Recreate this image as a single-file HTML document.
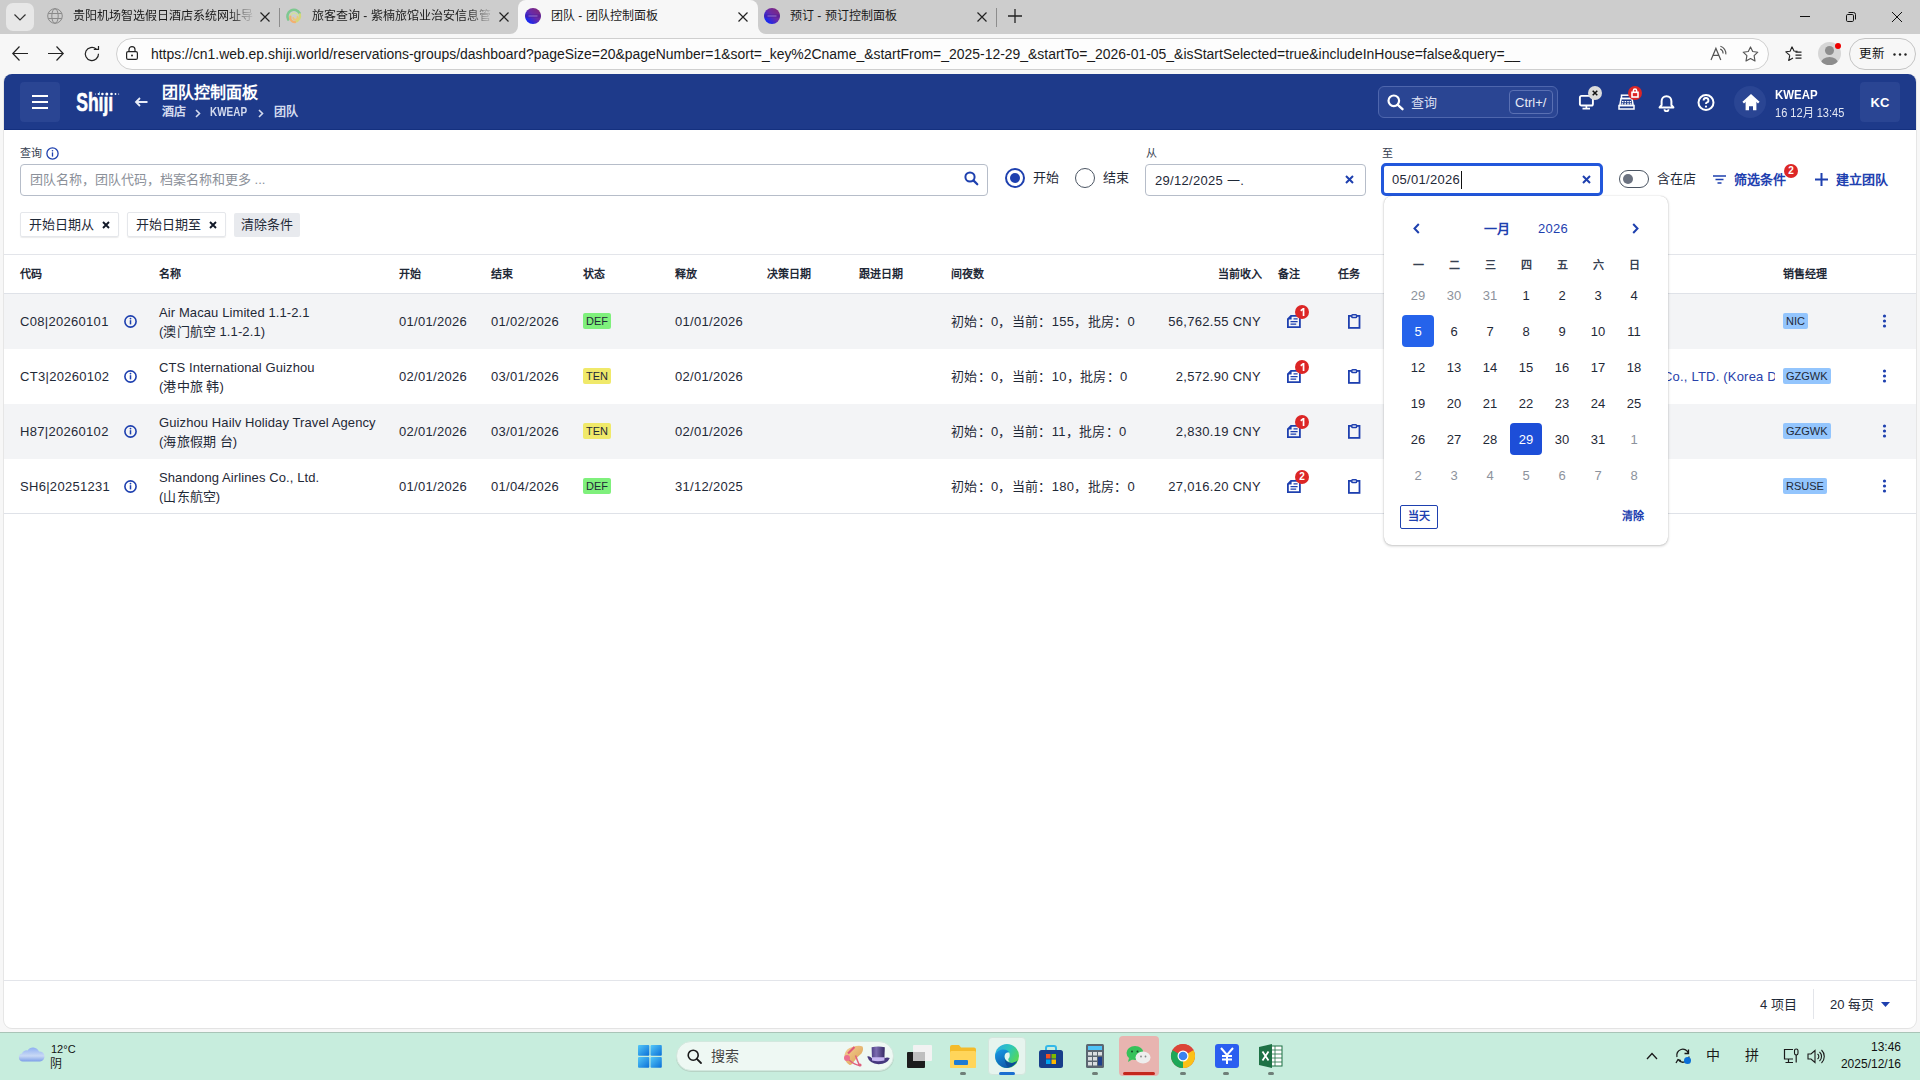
<!DOCTYPE html>
<html lang="zh-CN"><head><meta charset="utf-8">
<style>
*{box-sizing:border-box;margin:0;padding:0}
html,body{width:1920px;height:1080px;overflow:hidden;background:#f7f7f7;font-family:"Liberation Sans",sans-serif;color:#1f2937}
.a{position:absolute;white-space:nowrap}
svg{position:absolute;overflow:visible}
/* chrome */
#tabbar{position:absolute;left:0;top:0;width:1920px;height:34px;background:#cdcdcd}
.tabt{position:absolute;white-space:nowrap;overflow:hidden;top:9px;font-size:12px;line-height:14px;color:#1a1a1a}
.fade{-webkit-mask-image:linear-gradient(90deg,#000 85%,transparent)}
#toolbar{position:absolute;left:0;top:34px;width:1920px;height:40px;background:#f7f7f7}
#url{position:absolute;left:116px;top:38px;width:1653px;height:32px;border:1px solid #cfcfcf;border-radius:16px;background:#fdfdfd}
/* page */
#page{position:absolute;left:4px;top:74px;width:1912px;height:954px;background:#fff;border-radius:8px;overflow:hidden;box-shadow:0 0 1px #bbb}
#hdr{position:absolute;left:0;top:0;width:1912px;height:56px;background:#1f3a8a;border-bottom:1px solid #10297a}
.th{position:absolute;top:267px;font-size:11px;line-height:14px;font-weight:bold;color:#1f2937;white-space:nowrap}
.td{position:absolute;font-size:13px;line-height:16px;color:#1f2937;white-space:nowrap;letter-spacing:.3px}
.badge{position:absolute;height:16px;padding:0 3px;border-radius:2px;font-size:11px;line-height:16px;color:#1f2937}
.mb{position:absolute;height:16px;padding:0 3px;border-radius:2px;font-size:11px;line-height:16px;color:#1f2937;background:#93c5fd}
.nb{position:absolute;width:14px;height:14px;border-radius:50%;background:#dc2626;color:#fff;font-size:10px;line-height:14px;font-weight:bold;text-align:center}
.cd{position:absolute;width:36px;text-align:center;font-size:13px;line-height:16px;color:#1f2937}
</style></head><body>
<!-- TAB BAR -->
<div id="tabbar">
  <div class="a" style="left:6px;top:3px;width:28px;height:28px;background:#e7e7e7;border-radius:7px"></div>
  <svg style="left:14px;top:14px" width="12" height="7" viewBox="0 0 12 7"><path d="M0.5 0.5 L6 6 L11.5 0.5" fill="none" stroke="#333" stroke-width="1.2"/></svg>
  <!-- tab1 -->
  <svg style="left:47px;top:8px" width="16" height="16" viewBox="0 0 16 16"><g fill="none" stroke="#8a8a8a" stroke-width="1"><circle cx="8" cy="8" r="7.3"/><ellipse cx="8" cy="8" rx="3.2" ry="7.3"/><path d="M1.2 5.5H14.8M1.2 10.5H14.8"/></g></svg>
  <div class="tabt fade" style="left:73px;width:183px">贵阳机场智选假日酒店系统网址导</div>
  <svg style="left:260px;top:12px" width="10" height="10" viewBox="0 0 10 10"><path d="M0.5 0.5L9.5 9.5M9.5 0.5L0.5 9.5" stroke="#222" stroke-width="1.2"/></svg>
  <div class="a" style="left:279px;top:8px;width:1px;height:19px;background:#8d8d8d"></div>
  <!-- tab2 -->
  <svg style="left:286px;top:8px" width="16" height="16" viewBox="0 0 16 16"><g fill="none" stroke-linecap="round"><path d="M2.2 11.5A6.2 6.2 0 0 1 13.6 5.2" stroke="#7ec890" stroke-width="2.6"/><path d="M13.9 6.5A6 6 0 0 1 9.5 13.6" stroke="#d4d87a" stroke-width="2.4"/><path d="M4.4 8.3A4.6 4.6 0 0 0 9 14.2" stroke="#f2b070" stroke-width="2.2"/><path d="M5 7A3.6 3.6 0 0 1 11.5 7.5" stroke="#cfe0a0" stroke-width="1.6"/><path d="M7.2 10A2.2 2.2 0 0 0 11.5 9" stroke="#ebc878" stroke-width="1.8"/></g></svg>
  <div class="tabt fade" style="left:312px;width:182px">旅客查询 - 紫楠旅馆业治安信息管</div>
  <svg style="left:499px;top:12px" width="10" height="10" viewBox="0 0 10 10"><path d="M0.5 0.5L9.5 9.5M9.5 0.5L0.5 9.5" stroke="#222" stroke-width="1.2"/></svg>
  <!-- active tab -->
  <div class="a" style="left:518px;top:0;width:240px;height:34px;background:#f7f7f7;border-radius:8px 8px 0 0"></div>
  <svg style="left:510px;top:26px" width="8" height="8" viewBox="0 0 8 8"><path d="M8 0 V8 H0 A8 8 0 0 0 8 0Z" fill="#f7f7f7"/></svg>
  <svg style="left:758px;top:26px" width="8" height="8" viewBox="0 0 8 8"><path d="M0 0 V8 H8 A8 8 0 0 1 0 0Z" fill="#f7f7f7"/></svg>
  <svg style="left:525px;top:8px" width="16" height="16" viewBox="0 0 16 16"><defs><linearGradient id="g1" x1="0.1" y1="0.9" x2="0.9" y2="0.1"><stop offset="0" stop-color="#0628ff"/><stop offset=".55" stop-color="#6a2aa8"/><stop offset="1" stop-color="#80287a"/></linearGradient></defs><circle cx="8" cy="8" r="8" fill="url(#g1)"/><rect x="0" y="6.3" width="16" height="3.3" fill="#4a1a9a" opacity=".45"/><rect x="3.5" y="7.5" width="9" height="1" fill="#c9b8f0" opacity=".55"/></svg>
  <div class="tabt" style="left:551px">团队 - 团队控制面板</div>
  <svg style="left:738px;top:12px" width="10" height="10" viewBox="0 0 10 10"><path d="M0.5 0.5L9.5 9.5M9.5 0.5L0.5 9.5" stroke="#222" stroke-width="1.2"/></svg>
  <!-- tab4 -->
  <svg style="left:764px;top:8px" width="16" height="16" viewBox="0 0 16 16"><circle cx="8" cy="8" r="8" fill="url(#g1)"/><rect x="0" y="6.3" width="16" height="3.3" fill="#4a1a9a" opacity=".45"/><rect x="3.5" y="7.5" width="9" height="1" fill="#c9b8f0" opacity=".55"/></svg>
  <div class="tabt" style="left:790px">预订 - 预订控制面板</div>
  <svg style="left:977px;top:12px" width="10" height="10" viewBox="0 0 10 10"><path d="M0.5 0.5L9.5 9.5M9.5 0.5L0.5 9.5" stroke="#222" stroke-width="1.2"/></svg>
  <div class="a" style="left:996px;top:8px;width:1px;height:19px;background:#8d8d8d"></div>
  <svg style="left:1008px;top:9px" width="14" height="14" viewBox="0 0 14 14"><path d="M7 0V14M0 7H14" stroke="#222" stroke-width="1.3"/></svg>
  <!-- window controls -->
  <div class="a" style="left:1800px;top:16px;width:10px;height:1px;background:#111"></div>
  <svg style="left:1846px;top:12px" width="10" height="10" viewBox="0 0 10 10"><rect x="0.5" y="2.5" width="7" height="7" rx="1.2" fill="none" stroke="#111" stroke-width="1"/><path d="M2.5 0.5H7.5A2 2 0 0 1 9.5 2.5V7.5" fill="none" stroke="#111" stroke-width="1"/></svg>
  <svg style="left:1892px;top:12px" width="10" height="10" viewBox="0 0 10 10"><path d="M0 0L10 10M10 0L0 10" stroke="#111" stroke-width="1"/></svg>
</div>
<!-- TOOLBAR -->
<div id="toolbar"></div>
<svg style="left:12px;top:46px" width="16" height="15" viewBox="0 0 16 15"><path d="M7.5 0.5L0.8 7.5L7.5 14.5M0.8 7.5H16" fill="none" stroke="#222" stroke-width="1.2"/></svg>
<svg style="left:48px;top:46px" width="16" height="15" viewBox="0 0 16 15"><path d="M8.5 0.5L15.2 7.5L8.5 14.5M15.2 7.5H0" fill="none" stroke="#222" stroke-width="1.2"/></svg>
<svg style="left:84px;top:46px" width="16" height="16" viewBox="0 0 16 16"><path d="M14.5 7.8A6.6 6.6 0 1 1 12.2 3" fill="none" stroke="#222" stroke-width="1.2"/><path d="M9.8 3.4H14.5V0" fill="none" stroke="#222" stroke-width="1.2"/></svg>
<div id="url"></div>
<svg style="left:126px;top:46px" width="12" height="14" viewBox="0 0 12 14"><rect x="0.6" y="5.6" width="10.8" height="7.8" rx="1.5" fill="none" stroke="#222" stroke-width="1.2"/><path d="M3 5.6V3.6A3 3 0 0 1 9 3.6V5.6" fill="none" stroke="#222" stroke-width="1.2"/><circle cx="6" cy="9.5" r="1" fill="#222"/></svg>
<div class="a" id="urltext" style="left:151px;top:45px;font-size:13.95px;line-height:18px;color:#1a1a1a">https://cn1.web.ep.shiji.world/reservations-groups/dashboard?pageSize=20&amp;pageNumber=1&amp;sort=_key%2Cname_&amp;startFrom=_2025-12-29_&amp;startTo=_2026-01-05_&amp;isStartSelected=true&amp;includeInHouse=false&amp;query=__</div>
<svg style="left:1710px;top:45px" width="17" height="16" viewBox="0 0 17 16"><path d="M1 14.9L5.9 3.4L10.8 14.9M2.8 10.4H9.1" fill="none" stroke="#555" stroke-width="1.2"/><path d="M10.4 1.3A7.5 7.5 0 0 1 15.8 9.4M10.2 4.1A4.8 4.8 0 0 1 13.1 8.6" fill="none" stroke="#555" stroke-width="1.1"/></svg>
<svg style="left:1742px;top:46px" width="17" height="16" viewBox="0 0 17 16"><path d="M8.5 0.9L10.7 5.5L15.8 6.2L12.1 9.7L13 15L8.5 12.5L4 15L4.9 9.7L1.2 6.2L6.3 5.5Z" fill="none" stroke="#555" stroke-width="1.15" stroke-linejoin="round"/></svg>
<svg style="left:1785px;top:46px" width="17" height="16" viewBox="0 0 17 16"><path d="M7 0.8L9 5L12.5 5.4M4.8 9.3L0.8 5.8L5.1 5.3L7 0.8M4.8 9.3L3.7 14.5L8 12" fill="none" stroke="#222" stroke-width="1.1" stroke-linejoin="round"/><path d="M10.5 6.2H16.5M10.5 9.2H16.5M10.5 12.2H16.5" stroke="#222" stroke-width="1.2"/></svg>
<div class="a" style="left:1818px;top:42px;width:23px;height:23px;border-radius:50%;background:#d6d6d6;overflow:hidden">
  <div class="a" style="left:7px;top:4px;width:9px;height:9px;border-radius:50%;background:#8d8d8d"></div>
  <div class="a" style="left:3px;top:15px;width:17px;height:12px;border-radius:50%;background:#8d8d8d"></div>
</div>
<div class="a" style="left:1835px;top:43px;width:6px;height:6px;border-radius:50%;background:#e00"></div>
<div class="a" style="left:1849px;top:38px;width:67px;height:32px;border:1px solid #c4c4c4;border-radius:16px"></div>
<div class="a" style="left:1859px;top:47px;font-size:12.5px;line-height:15px;color:#111">更新</div>
<svg style="left:1893px;top:53px" width="14" height="3" viewBox="0 0 14 3"><circle cx="1.5" cy="1.5" r="1.2" fill="#222"/><circle cx="7" cy="1.5" r="1.2" fill="#222"/><circle cx="12.5" cy="1.5" r="1.2" fill="#222"/></svg>

<!-- PAGE -->
<div class="a" style="left:4px;top:74px;width:1912px;height:954px;background:#fff;border-radius:8px;box-shadow:-1px 0 0 #e6e6e6,1px 0 0 #e6e6e6,0 1px 0 #e3e3e3"></div>
<div class="a" style="left:4px;top:74px;width:1912px;height:56px;background:#1e3a8a;border-radius:8px 8px 0 0;border-bottom:1px solid #14307f"></div>
<div class="a" style="left:20px;top:82px;width:40px;height:40px;background:#2a4593;border-radius:4px"></div>
<div class="a" style="left:32px;top:95px;width:16px;height:2px;background:#fff"></div>
<div class="a" style="left:32px;top:101px;width:16px;height:2px;background:#fff"></div>
<div class="a" style="left:32px;top:107px;width:16px;height:2px;background:#fff"></div>
<svg style="left:75px;top:88px" width="46" height="29" viewBox="0 0 46 29"><text x="1.2" y="22.6" font-family="Liberation Sans" font-weight="bold" font-size="25" fill="#fff" stroke="#fff" stroke-width="0.6" textLength="37" lengthAdjust="spacingAndGlyphs">Shiji</text><rect x="25" y="1" width="20" height="6.5" fill="#1e3a8a"/><g fill="#fff"><circle cx="20.5" cy="6" r="0.5"/><circle cx="23.5" cy="6" r="0.9"/><circle cx="27.4" cy="6" r="1.3"/><circle cx="31.8" cy="6" r="1.5"/><circle cx="36.5" cy="6" r="1.3"/><circle cx="40.5" cy="6" r="0.9"/><circle cx="43.6" cy="6" r="0.6"/></g></svg>
<svg style="left:135px;top:97px" width="13" height="10" viewBox="0 0 13 10"><path d="M5 1L1 5L5 9M1 5H12.5" fill="none" stroke="#e8ecf8" stroke-width="1.8"/></svg>
<div class="a" style="left:162px;top:83px;font-size:16px;line-height:19px;font-weight:bold;color:#fff">团队控制面板</div>
<div class="a" style="left:162px;top:105px;font-size:12px;line-height:15px;font-weight:bold;color:#d3daee">酒店</div>
<svg style="left:195px;top:109px" width="6" height="9" viewBox="0 0 6 9"><path d="M1 1L4.5 4.5L1 8" fill="none" stroke="#d3daee" stroke-width="1.6"/></svg>
<div class="a" style="left:210px;top:105px;font-size:12px;line-height:15px;font-weight:bold;color:#d3daee;transform:scaleX(.83);transform-origin:0 0">KWEAP</div>
<svg style="left:258px;top:109px" width="6" height="9" viewBox="0 0 6 9"><path d="M1 1L4.5 4.5L1 8" fill="none" stroke="#d3daee" stroke-width="1.6"/></svg>
<div class="a" style="left:274px;top:105px;font-size:12px;line-height:15px;font-weight:bold;color:#d3daee">团队</div>
<!-- header right -->
<div class="a" style="left:1378px;top:86px;width:180px;height:32px;background:#2a4593;border:1px solid #4e66ad;border-radius:6px"></div>
<svg style="left:1387px;top:94px" width="17" height="16" viewBox="0 0 17 16"><circle cx="6.8" cy="6.8" r="5.3" fill="none" stroke="#fff" stroke-width="2.2"/><path d="M10.8 10.8L15.5 15.2" stroke="#fff" stroke-width="2.4" stroke-linecap="round"/></svg>
<div class="a" style="left:1411px;top:95px;font-size:13px;line-height:16px;color:#d9def0">查询</div>
<div class="a" style="left:1509px;top:90px;width:44px;height:24px;border:1px solid #5a70b3;border-radius:4px"></div>
<div class="a" style="left:1515px;top:95px;font-size:13px;line-height:15px;color:#e6e9f5">Ctrl+/</div>
<svg style="left:1578px;top:94px" width="17" height="16" viewBox="0 0 17 16"><rect x="1.9" y="1.9" width="13" height="9.6" rx="1.6" fill="none" stroke="#fff" stroke-width="1.9"/><path d="M8.4 11.5V14.3M4.5 14.6H12" stroke="#fff" stroke-width="1.7"/></svg>
<div class="a" style="left:1588px;top:86px;width:14px;height:14px;border-radius:50%;background:#dcdcdc"></div>
<svg style="left:1592px;top:90px" width="6" height="6" viewBox="0 0 6 6"><path d="M0.7 0.7L5.3 5.3M5.3 0.7L0.7 5.3" stroke="#111" stroke-width="1.5"/></svg>
<svg style="left:1618px;top:94px" width="17" height="16" viewBox="0 0 17 16"><g fill="none" stroke="#fff" stroke-width="1.5"><rect x="3.5" y="1.2" width="9" height="3.3"/><path d="M3 4.5H14L15.2 11.5H1.8Z"/><rect x="1" y="11.5" width="15" height="3.5"/></g><g fill="#fff"><rect x="4" y="7" width="1.6" height="1.3"/><rect x="6.6" y="7" width="1.6" height="1.3"/><rect x="9.2" y="7" width="1.6" height="1.3"/><rect x="11.6" y="7" width="1.4" height="1.3"/><rect x="3.6" y="9.2" width="1.6" height="1.3"/><rect x="6.4" y="9.2" width="1.6" height="1.3"/><rect x="9.2" y="9.2" width="1.6" height="1.3"/><rect x="11.8" y="9.2" width="1.6" height="1.3"/></g></svg>
<div class="a" style="left:1628px;top:86px;width:14px;height:14px;border-radius:50%;background:#dc2626"></div>
<svg style="left:1631px;top:88px" width="8" height="10" viewBox="0 0 8 10"><rect x="1" y="4.3" width="6" height="4.7" fill="none" stroke="#fff" stroke-width="1.6"/><path d="M2.4 4.3V2.6A1.6 1.6 0 0 1 5.6 2.6V4.3" fill="none" stroke="#fff" stroke-width="1.5"/></svg>
<svg style="left:1658px;top:95px" width="17" height="16" viewBox="0 0 17 16"><path d="M8.5 1.2C5.5 1.2 3.6 3.4 3.6 6.3V10L1.6 12.4H15.4L13.4 10V6.3C13.4 3.4 11.5 1.2 8.5 1.2Z" fill="none" stroke="#fff" stroke-width="2" stroke-linejoin="round"/><path d="M6.5 14.2A2 2 0 0 0 10.5 14.2" fill="none" stroke="#fff" stroke-width="1.8"/></svg>
<svg style="left:1697px;top:94px" width="18" height="17" viewBox="0 0 18 17"><circle cx="9" cy="8.5" r="7.5" fill="none" stroke="#fff" stroke-width="2"/><path d="M6.6 6.4A2.4 2.4 0 1 1 9.6 8.7C9.1 8.9 9 9.3 9 10" fill="none" stroke="#fff" stroke-width="1.9"/><circle cx="9" cy="12.6" r="1.1" fill="#fff"/></svg>
<div class="a" style="left:1734px;top:86px;width:32px;height:32px;border-radius:50%;background:#2a4593"></div>
<svg style="left:1742px;top:94px" width="18" height="17" viewBox="0 0 18 17"><path d="M1.2 8.6L9 1.6L16.8 8.6" fill="none" stroke="#fff" stroke-width="2.3" stroke-linejoin="miter"/><path d="M3.6 7.2L9 2.6L14.4 7.2V16.2H11V12.2H7V16.2H3.6Z" fill="#fff"/></svg>
<div class="a" style="left:1775px;top:87px;font-size:13px;line-height:15px;font-weight:bold;color:#fff;transform:scaleX(.88);transform-origin:0 0">KWEAP</div>
<div class="a" style="left:1775px;top:106px;font-size:12px;line-height:15px;color:#e3e7f3;transform:scaleX(.92);transform-origin:0 0">16 12月 13:45</div>
<div class="a" style="left:1860px;top:82px;width:40px;height:40px;background:#2a4593;border-radius:4px"></div>
<div class="a" style="left:1860px;top:95px;width:40px;text-align:center;font-size:13px;line-height:15px;font-weight:bold;color:#fff">KC</div>

<!-- FILTERS -->
<div class="a" style="left:20px;top:146px;font-size:11px;line-height:14px;color:#374151">查询</div>
<svg style="left:46px;top:147px" width="13" height="13" viewBox="0 0 13 13"><circle cx="6.5" cy="6.5" r="5.6" fill="none" stroke="#1e40af" stroke-width="1.3"/><rect x="5.85" y="5.4" width="1.3" height="4.2" fill="#1e40af"/><circle cx="6.5" cy="3.7" r="0.8" fill="#1e40af"/></svg>
<div class="a" style="left:20px;top:164px;width:968px;height:32px;border:1px solid #b6bdc9;border-radius:4px"></div>
<div class="a" style="left:30px;top:172px;font-size:13px;line-height:16px;color:#8b9099">团队名称，团队代码，档案名称和更多 ...</div>
<svg style="left:964px;top:171px" width="15" height="15" viewBox="0 0 15 15"><circle cx="6" cy="6" r="4.6" fill="none" stroke="#1e40af" stroke-width="2"/><path d="M9.4 9.4L13.3 13.3" stroke="#1e40af" stroke-width="2.2" stroke-linecap="round"/></svg>
<div class="a" style="left:1005px;top:168px;width:20px;height:20px;border-radius:50%;border:2px solid #1e40af"></div>
<div class="a" style="left:1010px;top:173px;width:10px;height:10px;border-radius:50%;background:#1e40af"></div>
<div class="a" style="left:1033px;top:170px;font-size:13px;line-height:16px;color:#1f2937">开始</div>
<div class="a" style="left:1075px;top:168px;width:20px;height:20px;border-radius:50%;border:1px solid #4b5563"></div>
<div class="a" style="left:1103px;top:170px;font-size:13px;line-height:16px;color:#1f2937">结束</div>
<div class="a" style="left:1146px;top:146px;font-size:11px;line-height:14px;color:#374151">从</div>
<div class="a" style="left:1145px;top:164px;width:221px;height:32px;border:1px solid #b6bdc9;border-radius:4px"></div>
<div class="a" style="left:1155px;top:173px;font-size:13px;line-height:16px;color:#1f2937;letter-spacing:.3px">29/12/2025 一.</div>
<svg style="left:1345px;top:175px" width="9" height="9" viewBox="0 0 9 9"><path d="M1 1L8 8M8 1L1 8" stroke="#1e40af" stroke-width="2"/></svg>
<div class="a" style="left:1382px;top:146px;font-size:11px;line-height:14px;color:#374151">至</div>
<div class="a" style="left:1381px;top:163px;width:222px;height:33px;border:3px solid #2257db;border-radius:5px"></div>
<div class="a" id="todate" style="left:1392px;top:172px;font-size:13px;line-height:16px;color:#1f2937;letter-spacing:.3px">05/01/2026</div>
<div class="a" style="left:1461px;top:171px;width:1px;height:18px;background:#111"></div>
<svg style="left:1582px;top:175px" width="9" height="9" viewBox="0 0 9 9"><path d="M1 1L8 8M8 1L1 8" stroke="#1e40af" stroke-width="2"/></svg>
<div class="a" style="left:1619px;top:170px;width:30px;height:18px;border-radius:9px;border:1.5px solid #4b5563"></div>
<div class="a" style="left:1623px;top:174px;width:10px;height:10px;border-radius:50%;background:#6b7280"></div>
<div class="a" style="left:1657px;top:171px;font-size:13px;line-height:16px;color:#1f2937">含在店</div>
<svg style="left:1713px;top:175px" width="14" height="9" viewBox="0 0 14 9"><path d="M0 1H13M2.5 4.5H10.5M4.5 8H8.5" stroke="#1e40af" stroke-width="1.6"/></svg>
<div class="a" style="left:1734px;top:172px;font-size:13px;line-height:16px;font-weight:bold;color:#1e40af">筛选条件</div>
<div class="a" style="left:1784px;top:164px;width:14px;height:14px;border-radius:50%;background:#dc2626;color:#fff;font-size:10px;line-height:14px;font-weight:bold;text-align:center">2</div>
<svg style="left:1815px;top:173px" width="13" height="13" viewBox="0 0 13 13"><path d="M6.5 0V13M0 6.5H13" stroke="#1e40af" stroke-width="2"/></svg>
<div class="a" style="left:1836px;top:172px;font-size:13px;line-height:16px;font-weight:bold;color:#1e40af">建立团队</div>
<!-- chips -->
<div class="a" style="left:20px;top:212px;width:99px;height:25px;border:1px solid #e5e7eb;border-radius:2px;box-shadow:0 1px 1px rgba(0,0,0,.08)"></div>
<div class="a" style="left:29px;top:217px;font-size:13px;line-height:16px;color:#1f2937">开始日期从</div>
<svg style="left:102px;top:221px" width="8" height="8" viewBox="0 0 8 8"><path d="M1 1L7 7M7 1L1 7" stroke="#111827" stroke-width="1.9"/></svg>
<div class="a" style="left:127px;top:212px;width:99px;height:25px;border:1px solid #e5e7eb;border-radius:2px;box-shadow:0 1px 1px rgba(0,0,0,.08)"></div>
<div class="a" style="left:136px;top:217px;font-size:13px;line-height:16px;color:#1f2937">开始日期至</div>
<svg style="left:209px;top:221px" width="8" height="8" viewBox="0 0 8 8"><path d="M1 1L7 7M7 1L1 7" stroke="#111827" stroke-width="1.9"/></svg>
<div class="a" style="left:234px;top:213px;width:66px;height:24px;background:#e8eaee;border-radius:2px"></div>
<div class="a" style="left:241px;top:217px;font-size:13px;line-height:16px;color:#1f2937">清除条件</div>
<!-- TABLE -->
<div class="a" style="left:4px;top:254px;width:1912px;height:1px;background:#e3e5ea"></div>
<div class="a" style="left:4px;top:293px;width:1912px;height:1px;background:#dfe2e8"></div>
<div class="a" style="left:4px;top:294px;width:1912px;height:55px;background:#f3f4f6"></div>
<div class="a" style="left:4px;top:404px;width:1912px;height:55px;background:#f3f4f6"></div>
<div class="a" style="left:4px;top:513px;width:1912px;height:1px;background:#dfe2e8"></div>
<div class="th" style="left:20px">代码</div>
<div class="th" style="left:159px">名称</div>
<div class="th" style="left:399px">开始</div>
<div class="th" style="left:491px">结束</div>
<div class="th" style="left:583px">状态</div>
<div class="th" style="left:675px">释放</div>
<div class="th" style="left:767px">决策日期</div>
<div class="th" style="left:859px">跟进日期</div>
<div class="th" style="left:951px">间夜数</div>
<div class="th" style="left:1218px">当前收入</div>
<div class="th" style="left:1278px">备注</div>
<div class="th" style="left:1338px">任务</div>
<div class="th" style="left:1783px">销售经理</div>
<div class="td" style="left:20px;top:314px">C08|20260101</div>
<svg style="left:124px;top:315px" width="13" height="13" viewBox="0 0 13 13"><circle cx="6.5" cy="6.5" r="5.6" fill="none" stroke="#1e40af" stroke-width="1.6"/><rect x="5.75" y="5.2" width="1.5" height="4.2" fill="#1e40af"/><circle cx="6.5" cy="3.6" r="0.9" fill="#1e40af"/></svg>
<div class="td" style="left:159px;top:305px;letter-spacing:.1px">Air Macau Limited 1.1-2.1</div>
<div class="td" style="left:159px;top:324px;letter-spacing:.1px">(澳门航空 1.1-2.1)</div>
<div class="td" style="left:399px;top:314px">01/01/2026</div>
<div class="td" style="left:491px;top:314px">01/02/2026</div>
<div class="badge" style="left:583px;top:313px;background:#7ff07c">DEF</div>
<div class="td" style="left:675px;top:314px">01/01/2026</div>
<div class="td" style="left:951px;top:314px">初始：0，当前：155，批房：0</div>
<div class="td" style="left:1000px;width:1261px;text-align:right;left:0;top:314px">56,762.55 CNY</div>
<svg style="left:1287px;top:315px" width="14" height="13" viewBox="0 0 14 13"><path d="M4 0.9H12.9V12.1H0.9V4Z" fill="none" stroke="#1e40af" stroke-width="1.8" stroke-linejoin="miter"/><path d="M4 0.9V4H0.9" fill="#1e40af" stroke="#1e40af" stroke-width="1.2"/><path d="M6.5 3.8H10.6M3.5 6.6H10.6M3.5 9.1H9.2" stroke="#1e40af" stroke-width="1.3"/></svg>
<div class="nb" style="left:1295px;top:305px"></div><svg style="left:1300px;top:308px" width="5" height="8" viewBox="0 0 5 8"><path d="M0.3 2.1L2.9 0H4.4V8H2.7V2.3L1.1 3.4Z" fill="#fff"/></svg>
<svg style="left:1347px;top:314px" width="14" height="15" viewBox="0 0 14 15"><rect x="1.9" y="1.9" width="10.6" height="12" fill="none" stroke="#1e40af" stroke-width="1.8"/><rect x="4.8" y="0.8" width="4.8" height="2.8" rx="0.8" fill="#fff" stroke="#1e40af" stroke-width="1.5"/></svg>
<div class="mb" style="left:1783px;top:313px">NIC</div>
<svg style="left:1882px;top:314px" width="5" height="14" viewBox="0 0 5 14"><circle cx="2.5" cy="2" r="1.6" fill="#1e40af"/><circle cx="2.5" cy="7" r="1.6" fill="#1e40af"/><circle cx="2.5" cy="12" r="1.6" fill="#1e40af"/></svg>
<div class="td" style="left:20px;top:369px">CT3|20260102</div>
<svg style="left:124px;top:370px" width="13" height="13" viewBox="0 0 13 13"><circle cx="6.5" cy="6.5" r="5.6" fill="none" stroke="#1e40af" stroke-width="1.6"/><rect x="5.75" y="5.2" width="1.5" height="4.2" fill="#1e40af"/><circle cx="6.5" cy="3.6" r="0.9" fill="#1e40af"/></svg>
<div class="td" style="left:159px;top:360px;letter-spacing:.1px">CTS International Guizhou</div>
<div class="td" style="left:159px;top:379px;letter-spacing:.1px">(港中旅 韩)</div>
<div class="td" style="left:399px;top:369px">02/01/2026</div>
<div class="td" style="left:491px;top:369px">03/01/2026</div>
<div class="badge" style="left:583px;top:368px;background:#f0e96a">TEN</div>
<div class="td" style="left:675px;top:369px">02/01/2026</div>
<div class="td" style="left:951px;top:369px">初始：0，当前：10，批房：0</div>
<div class="td" style="left:1000px;width:1261px;text-align:right;left:0;top:369px">2,572.90 CNY</div>
<svg style="left:1287px;top:370px" width="14" height="13" viewBox="0 0 14 13"><path d="M4 0.9H12.9V12.1H0.9V4Z" fill="none" stroke="#1e40af" stroke-width="1.8" stroke-linejoin="miter"/><path d="M4 0.9V4H0.9" fill="#1e40af" stroke="#1e40af" stroke-width="1.2"/><path d="M6.5 3.8H10.6M3.5 6.6H10.6M3.5 9.1H9.2" stroke="#1e40af" stroke-width="1.3"/></svg>
<div class="nb" style="left:1295px;top:360px"></div><svg style="left:1300px;top:363px" width="5" height="8" viewBox="0 0 5 8"><path d="M0.3 2.1L2.9 0H4.4V8H2.7V2.3L1.1 3.4Z" fill="#fff"/></svg>
<svg style="left:1347px;top:369px" width="14" height="15" viewBox="0 0 14 15"><rect x="1.9" y="1.9" width="10.6" height="12" fill="none" stroke="#1e40af" stroke-width="1.8"/><rect x="4.8" y="0.8" width="4.8" height="2.8" rx="0.8" fill="#fff" stroke="#1e40af" stroke-width="1.5"/></svg>
<div class="a" style="left:1600px;top:365px;width:175px;height:24px;overflow:hidden"><div class="td" style="left:63px;top:4px;color:#2841aa;letter-spacing:.2px">Co., LTD. (Korea Department)</div></div>
<div class="mb" style="left:1783px;top:368px">GZGWK</div>
<svg style="left:1882px;top:369px" width="5" height="14" viewBox="0 0 5 14"><circle cx="2.5" cy="2" r="1.6" fill="#1e40af"/><circle cx="2.5" cy="7" r="1.6" fill="#1e40af"/><circle cx="2.5" cy="12" r="1.6" fill="#1e40af"/></svg>
<div class="td" style="left:20px;top:424px">H87|20260102</div>
<svg style="left:124px;top:425px" width="13" height="13" viewBox="0 0 13 13"><circle cx="6.5" cy="6.5" r="5.6" fill="none" stroke="#1e40af" stroke-width="1.6"/><rect x="5.75" y="5.2" width="1.5" height="4.2" fill="#1e40af"/><circle cx="6.5" cy="3.6" r="0.9" fill="#1e40af"/></svg>
<div class="td" style="left:159px;top:415px;letter-spacing:.1px">Guizhou Hailv Holiday Travel Agency</div>
<div class="td" style="left:159px;top:434px;letter-spacing:.1px">(海旅假期 台)</div>
<div class="td" style="left:399px;top:424px">02/01/2026</div>
<div class="td" style="left:491px;top:424px">03/01/2026</div>
<div class="badge" style="left:583px;top:423px;background:#f0e96a">TEN</div>
<div class="td" style="left:675px;top:424px">02/01/2026</div>
<div class="td" style="left:951px;top:424px">初始：0，当前：11，批房：0</div>
<div class="td" style="left:1000px;width:1261px;text-align:right;left:0;top:424px">2,830.19 CNY</div>
<svg style="left:1287px;top:425px" width="14" height="13" viewBox="0 0 14 13"><path d="M4 0.9H12.9V12.1H0.9V4Z" fill="none" stroke="#1e40af" stroke-width="1.8" stroke-linejoin="miter"/><path d="M4 0.9V4H0.9" fill="#1e40af" stroke="#1e40af" stroke-width="1.2"/><path d="M6.5 3.8H10.6M3.5 6.6H10.6M3.5 9.1H9.2" stroke="#1e40af" stroke-width="1.3"/></svg>
<div class="nb" style="left:1295px;top:415px"></div><svg style="left:1300px;top:418px" width="5" height="8" viewBox="0 0 5 8"><path d="M0.3 2.1L2.9 0H4.4V8H2.7V2.3L1.1 3.4Z" fill="#fff"/></svg>
<svg style="left:1347px;top:424px" width="14" height="15" viewBox="0 0 14 15"><rect x="1.9" y="1.9" width="10.6" height="12" fill="none" stroke="#1e40af" stroke-width="1.8"/><rect x="4.8" y="0.8" width="4.8" height="2.8" rx="0.8" fill="#fff" stroke="#1e40af" stroke-width="1.5"/></svg>
<div class="mb" style="left:1783px;top:423px">GZGWK</div>
<svg style="left:1882px;top:424px" width="5" height="14" viewBox="0 0 5 14"><circle cx="2.5" cy="2" r="1.6" fill="#1e40af"/><circle cx="2.5" cy="7" r="1.6" fill="#1e40af"/><circle cx="2.5" cy="12" r="1.6" fill="#1e40af"/></svg>
<div class="td" style="left:20px;top:479px">SH6|20251231</div>
<svg style="left:124px;top:480px" width="13" height="13" viewBox="0 0 13 13"><circle cx="6.5" cy="6.5" r="5.6" fill="none" stroke="#1e40af" stroke-width="1.6"/><rect x="5.75" y="5.2" width="1.5" height="4.2" fill="#1e40af"/><circle cx="6.5" cy="3.6" r="0.9" fill="#1e40af"/></svg>
<div class="td" style="left:159px;top:470px;letter-spacing:.1px">Shandong Airlines Co., Ltd.</div>
<div class="td" style="left:159px;top:489px;letter-spacing:.1px">(山东航空)</div>
<div class="td" style="left:399px;top:479px">01/01/2026</div>
<div class="td" style="left:491px;top:479px">01/04/2026</div>
<div class="badge" style="left:583px;top:478px;background:#7ff07c">DEF</div>
<div class="td" style="left:675px;top:479px">31/12/2025</div>
<div class="td" style="left:951px;top:479px">初始：0，当前：180，批房：0</div>
<div class="td" style="left:1000px;width:1261px;text-align:right;left:0;top:479px">27,016.20 CNY</div>
<svg style="left:1287px;top:480px" width="14" height="13" viewBox="0 0 14 13"><path d="M4 0.9H12.9V12.1H0.9V4Z" fill="none" stroke="#1e40af" stroke-width="1.8" stroke-linejoin="miter"/><path d="M4 0.9V4H0.9" fill="#1e40af" stroke="#1e40af" stroke-width="1.2"/><path d="M6.5 3.8H10.6M3.5 6.6H10.6M3.5 9.1H9.2" stroke="#1e40af" stroke-width="1.3"/></svg>
<div class="nb" style="left:1295px;top:470px">2</div>
<svg style="left:1347px;top:479px" width="14" height="15" viewBox="0 0 14 15"><rect x="1.9" y="1.9" width="10.6" height="12" fill="none" stroke="#1e40af" stroke-width="1.8"/><rect x="4.8" y="0.8" width="4.8" height="2.8" rx="0.8" fill="#fff" stroke="#1e40af" stroke-width="1.5"/></svg>
<div class="mb" style="left:1783px;top:478px">RSUSE</div>
<svg style="left:1882px;top:479px" width="5" height="14" viewBox="0 0 5 14"><circle cx="2.5" cy="2" r="1.6" fill="#1e40af"/><circle cx="2.5" cy="7" r="1.6" fill="#1e40af"/><circle cx="2.5" cy="12" r="1.6" fill="#1e40af"/></svg>

<!-- CALENDAR -->
<div class="a" style="left:1384px;top:196px;width:284px;height:349px;background:#fff;border-radius:8px;box-shadow:0 1px 3px rgba(0,0,0,.22),0 0 1px rgba(0,0,0,.25)"></div>
<svg style="left:1413px;top:223px" width="7" height="11" viewBox="0 0 7 11"><path d="M5.8 1L1.5 5.5L5.8 10" fill="none" stroke="#1e40af" stroke-width="2"/></svg>
<svg style="left:1632px;top:223px" width="7" height="11" viewBox="0 0 7 11"><path d="M1.2 1L5.5 5.5L1.2 10" fill="none" stroke="#1e40af" stroke-width="2"/></svg>
<div class="a" style="left:1484px;top:221px;font-size:13px;line-height:16px;font-weight:bold;color:#1e40af">一月</div>
<div class="a" style="left:1538px;top:221px;font-size:13px;line-height:16px;color:#1e40af;letter-spacing:.3px">2026</div>
<div class="cd" style="left:1400px;top:257px;font-weight:bold;font-size:11px;color:#374151">一</div>
<div class="cd" style="left:1436px;top:257px;font-weight:bold;font-size:11px;color:#374151">二</div>
<div class="cd" style="left:1472px;top:257px;font-weight:bold;font-size:11px;color:#374151">三</div>
<div class="cd" style="left:1508px;top:257px;font-weight:bold;font-size:11px;color:#374151">四</div>
<div class="cd" style="left:1544px;top:257px;font-weight:bold;font-size:11px;color:#374151">五</div>
<div class="cd" style="left:1580px;top:257px;font-weight:bold;font-size:11px;color:#374151">六</div>
<div class="cd" style="left:1616px;top:257px;font-weight:bold;font-size:11px;color:#374151">日</div>
<div class="cd" style="left:1400px;top:288px;color:#8c929c">29</div>
<div class="cd" style="left:1436px;top:288px;color:#8c929c">30</div>
<div class="cd" style="left:1472px;top:288px;color:#8c929c">31</div>
<div class="cd" style="left:1508px;top:288px;color:#1f2937">1</div>
<div class="cd" style="left:1544px;top:288px;color:#1f2937">2</div>
<div class="cd" style="left:1580px;top:288px;color:#1f2937">3</div>
<div class="cd" style="left:1616px;top:288px;color:#1f2937">4</div>
<div class="a" style="left:1402px;top:315px;width:32px;height:32px;border-radius:4px;background:#2563eb"></div>
<div class="cd" style="left:1400px;top:324px;color:#fff">5</div>
<div class="cd" style="left:1436px;top:324px;color:#1f2937">6</div>
<div class="cd" style="left:1472px;top:324px;color:#1f2937">7</div>
<div class="cd" style="left:1508px;top:324px;color:#1f2937">8</div>
<div class="cd" style="left:1544px;top:324px;color:#1f2937">9</div>
<div class="cd" style="left:1580px;top:324px;color:#1f2937">10</div>
<div class="cd" style="left:1616px;top:324px;color:#1f2937">11</div>
<div class="cd" style="left:1400px;top:360px;color:#1f2937">12</div>
<div class="cd" style="left:1436px;top:360px;color:#1f2937">13</div>
<div class="cd" style="left:1472px;top:360px;color:#1f2937">14</div>
<div class="cd" style="left:1508px;top:360px;color:#1f2937">15</div>
<div class="cd" style="left:1544px;top:360px;color:#1f2937">16</div>
<div class="cd" style="left:1580px;top:360px;color:#1f2937">17</div>
<div class="cd" style="left:1616px;top:360px;color:#1f2937">18</div>
<div class="cd" style="left:1400px;top:396px;color:#1f2937">19</div>
<div class="cd" style="left:1436px;top:396px;color:#1f2937">20</div>
<div class="cd" style="left:1472px;top:396px;color:#1f2937">21</div>
<div class="cd" style="left:1508px;top:396px;color:#1f2937">22</div>
<div class="cd" style="left:1544px;top:396px;color:#1f2937">23</div>
<div class="cd" style="left:1580px;top:396px;color:#1f2937">24</div>
<div class="cd" style="left:1616px;top:396px;color:#1f2937">25</div>
<div class="cd" style="left:1400px;top:432px;color:#1f2937">26</div>
<div class="cd" style="left:1436px;top:432px;color:#1f2937">27</div>
<div class="cd" style="left:1472px;top:432px;color:#1f2937">28</div>
<div class="a" style="left:1510px;top:423px;width:32px;height:32px;border-radius:4px;background:#1d4ed8"></div>
<div class="cd" style="left:1508px;top:432px;color:#fff">29</div>
<div class="cd" style="left:1544px;top:432px;color:#1f2937">30</div>
<div class="cd" style="left:1580px;top:432px;color:#1f2937">31</div>
<div class="cd" style="left:1616px;top:432px;color:#8c929c">1</div>
<div class="cd" style="left:1400px;top:468px;color:#8c929c">2</div>
<div class="cd" style="left:1436px;top:468px;color:#8c929c">3</div>
<div class="cd" style="left:1472px;top:468px;color:#8c929c">4</div>
<div class="cd" style="left:1508px;top:468px;color:#8c929c">5</div>
<div class="cd" style="left:1544px;top:468px;color:#8c929c">6</div>
<div class="cd" style="left:1580px;top:468px;color:#8c929c">7</div>
<div class="cd" style="left:1616px;top:468px;color:#8c929c">8</div>
<div class="a" style="left:1400px;top:505px;width:38px;height:24px;border:1px solid #1e40af;border-radius:2px"></div>
<div class="a" style="left:1400px;top:509px;width:38px;text-align:center;font-size:11px;line-height:15px;font-weight:bold;color:#1e40af">当天</div>
<div class="a" style="left:1622px;top:509px;font-size:11px;line-height:15px;font-weight:bold;color:#1e40af">清除</div>
<!-- FOOTER -->
<div class="a" style="left:4px;top:980px;width:1912px;height:1px;background:#e3e5ea"></div>
<div class="a" style="left:1760px;top:997px;font-size:13px;line-height:16px;color:#1f2937">4 项目</div>
<div class="a" style="left:1813px;top:989px;width:1px;height:30px;background:#e3e5ea"></div>
<div class="a" style="left:1830px;top:997px;font-size:13px;line-height:16px;color:#1f2937">20 每页</div>
<svg style="left:1881px;top:1002px" width="9" height="5" viewBox="0 0 9 5"><path d="M0 0H9L4.5 5Z" fill="#1e40af"/></svg>
<!-- TASKBAR -->
<div class="a" style="left:0;top:1032px;width:1920px;height:48px;background:#c7eddd;border-top:1px solid #a9c4b7"></div>
<svg style="left:19px;top:1045px" width="25" height="17" viewBox="0 0 25 17"><defs><linearGradient id="cl" x1="0" y1="0" x2="0" y2="1"><stop offset="0" stop-color="#8fb0f2"/><stop offset=".6" stop-color="#c9d9f5"/><stop offset="1" stop-color="#7d9fe8"/></linearGradient></defs><path d="M4 16.5A4 4 0 0 1 3 8.6A4.5 4.5 0 0 1 8.5 5.5A6.5 6.5 0 0 1 20 6.5A5 5 0 0 1 21 16.5Z" fill="url(#cl)"/></svg>
<div class="a" style="left:51px;top:1042px;font-size:11px;line-height:14px;color:#111">12°C</div>
<div class="a" style="left:50px;top:1057px;font-size:12px;line-height:15px;color:#222">阴</div>
<!-- start -->
<svg style="left:638px;top:1045px" width="24" height="23" viewBox="0 0 24 23"><defs><linearGradient id="wl" x1="0" y1="0" x2="1" y2="1"><stop offset="0" stop-color="#54c8f8"/><stop offset="1" stop-color="#0a6fd8"/></linearGradient></defs><rect x="0" y="0" width="11.3" height="10.8" rx="1" fill="url(#wl)"/><rect x="12.5" y="0" width="11.3" height="10.8" rx="1" fill="url(#wl)"/><rect x="0" y="12" width="11.3" height="10.8" rx="1" fill="url(#wl)"/><rect x="12.5" y="12" width="11.3" height="10.8" rx="1" fill="url(#wl)"/></svg>
<div class="a" style="left:676px;top:1041px;width:218px;height:30px;border-radius:15px;background:#eef8f3;border:1px solid #d2e8de;box-shadow:0 1px 0 #b8d4c6"></div>
<svg style="left:687px;top:1049px" width="15" height="15" viewBox="0 0 15 15"><circle cx="6.2" cy="6.2" r="5" fill="none" stroke="#1a1a1a" stroke-width="1.6"/><path d="M9.8 9.8L14 14" stroke="#1a1a1a" stroke-width="1.8" stroke-linecap="round"/></svg>
<div class="a" style="left:711px;top:1048px;font-size:14px;line-height:16px;color:#444">搜索</div>
<svg style="left:843px;top:1045px" width="22" height="22" viewBox="0 0 22 22"><defs><linearGradient id="bn" x1="0" y1="0" x2="1" y2="1"><stop offset="0" stop-color="#f6cf98"/><stop offset="1" stop-color="#d9a050"/></linearGradient></defs><path d="M1.5 10Q3 3 9.5 2Q16 0 19.5 1.5Q21 4.5 18.5 8.5Q14 12 10.5 17Q8 21.5 6 19.5Q1.5 17 1.5 10Z" fill="url(#bn)"/><path d="M5 8.5L11.5 2" stroke="#e0587a" stroke-width="2.2"/><circle cx="4" cy="13" r="3" fill="#ec7090"/><path d="M6 15Q12 20 16.5 20.5M12.5 10.5Q14.5 16 16.5 20.5" fill="none" stroke="#e0607e" stroke-width="1.5"/><circle cx="17" cy="20" r="1.6" fill="#e0607e"/></svg>
<svg style="left:867px;top:1046px" width="23" height="19" viewBox="0 0 23 19"><defs><linearGradient id="th" x1="0" y1="0" x2="1" y2="0"><stop offset="0" stop-color="#4e3f86"/><stop offset=".35" stop-color="#7c6cb0"/><stop offset="1" stop-color="#352a64"/></linearGradient></defs><path d="M4.6 1.2Q11 0 17.8 1.2L17.4 12.5H5Z" fill="url(#th)"/><path d="M0.2 10.5Q2.5 9.8 5 12.2Q11 14.5 17.4 12.2Q20 10.8 22.8 12Q20.5 17.8 11.5 18.2Q2.5 17.8 0.2 10.5Z" fill="#46387e"/><path d="M5 11.2H17.4V14.6Q11 16 5 14.6Z" fill="#c6b6f2"/></svg>
<svg style="left:907px;top:1045px" width="25" height="23" viewBox="0 0 25 23"><rect x="0" y="7" width="18" height="16" rx="1" fill="#1c1c1c"/><rect x="6" y="0" width="19" height="16" rx="1" fill="#f2f2f2"/><rect x="6" y="7" width="12" height="9" fill="#bfbfbf"/></svg>
<svg style="left:950px;top:1045px" width="26" height="23" viewBox="0 0 26 23"><path d="M0 2A2 2 0 0 1 2 0H9L11 2.5H24A2 2 0 0 1 26 4.5V21A2 2 0 0 1 24 23H2A2 2 0 0 1 0 21Z" fill="#f4bb2a"/><rect x="0" y="6" width="26" height="17" rx="1.5" fill="#ffd55a"/><rect x="4" y="15" width="14" height="5" rx="1" fill="#1d7bd4"/></svg>
<div class="a" style="left:960px;top:1072px;width:6px;height:3px;border-radius:2px;background:#6f7f78"></div>
<div class="a" style="left:988px;top:1037px;width:38px;height:38px;border-radius:4px;background:#e6f4ee;border:1px solid #d3e6dd"></div>
<svg style="left:995px;top:1044px" width="24" height="24" viewBox="0 0 24 24"><defs><linearGradient id="ed1" x1="0" y1="0" x2="1" y2="0.6"><stop offset="0" stop-color="#2aa8ea"/><stop offset=".55" stop-color="#2ec8b8"/><stop offset="1" stop-color="#5ad850"/></linearGradient><linearGradient id="ed2" x1="0" y1="0" x2="0.6" y2="1"><stop offset="0" stop-color="#1a9ae6"/><stop offset="1" stop-color="#0d55a6"/></linearGradient></defs><circle cx="12" cy="12" r="12" fill="url(#ed1)"/><path d="M12 24A12 12 0 0 1 0.2 11.5C1.2 7.5 5 5.6 8.6 5.6C11.6 5.6 13.6 7.2 14.3 8.8C12 7.8 9.6 9.4 9.6 12.6C9.6 16.6 13.2 19.2 17.2 19C19.6 18.9 21.4 17.6 22.3 16.6C20.3 21 16.4 24 12 24Z" fill="url(#ed2)"/><path d="M9.6 12.6C9.6 16.6 13.2 19.2 17.2 19C19.6 18.9 21.4 17.6 22.3 16.6C20.8 20.5 17 23.3 13 23.3C10.6 21.2 9.6 17 9.6 12.6Z" fill="#0b4a94" opacity=".8"/><path d="M14.3 8.8C12 7.8 9.6 9.4 9.6 12.6C9.6 15.6 11.6 17.4 14.6 17.8C13.2 16.6 12.6 15 14.2 13.8C14.9 13 14.9 10 14.3 8.8Z" fill="#e6f4ee"/></svg>
<div class="a" style="left:999px;top:1072px;width:16px;height:3px;border-radius:2px;background:#1b6fd0"></div>
<svg style="left:1039px;top:1045px" width="24" height="23" viewBox="0 0 24 23"><path d="M7 5V3A2 2 0 0 1 9 1H15A2 2 0 0 1 17 3V5" fill="none" stroke="#33b8e8" stroke-width="2"/><rect x="0" y="5" width="24" height="18" rx="2.5" fill="#173e8a"/><rect x="7" y="9" width="4.5" height="4.5" fill="#f25022"/><rect x="12.5" y="9" width="4.5" height="4.5" fill="#7fba00"/><rect x="7" y="14.5" width="4.5" height="4.5" fill="#00a4ef"/><rect x="12.5" y="14.5" width="4.5" height="4.5" fill="#ffb900"/></svg>
<svg style="left:1086px;top:1044px" width="18" height="24" viewBox="0 0 18 24"><rect x="0" y="0" width="18" height="24" rx="1.5" fill="#5b6670"/><rect x="2" y="2" width="14" height="4" fill="#4fc3f7"/><g fill="#d9dde0"><rect x="2" y="8" width="4" height="3.5"/><rect x="7" y="8" width="4" height="3.5"/><rect x="12" y="8" width="4" height="3.5"/><rect x="2" y="13" width="4" height="3.5"/><rect x="7" y="13" width="4" height="3.5"/><rect x="2" y="18" width="4" height="3.5"/><rect x="7" y="18" width="4" height="3.5"/></g><rect x="12" y="13" width="4" height="8.5" fill="#1e3f8a"/></svg>
<div class="a" style="left:1092px;top:1072px;width:6px;height:3px;border-radius:2px;background:#6f7f78"></div>
<div class="a" style="left:1119px;top:1036px;width:40px;height:40px;border-radius:4px;background:#e8b4b0"></div>
<svg style="left:1126px;top:1046px" width="25" height="18" viewBox="0 0 25 18"><ellipse cx="9" cy="7" rx="8.5" ry="7" fill="#35c25a"/><path d="M3 12L2 16L7 13Z" fill="#35c25a"/><ellipse cx="17" cy="11.5" rx="7.5" ry="6" fill="#eeeeee"/><circle cx="6" cy="5.5" r="1" fill="#1a4d2a"/><circle cx="11.5" cy="5.5" r="1" fill="#1a4d2a"/><circle cx="15" cy="10.5" r="0.9" fill="#888"/><circle cx="19.5" cy="10.5" r="0.9" fill="#888"/></svg>
<div class="a" style="left:1123px;top:1072px;width:32px;height:3px;border-radius:2px;background:#c4281c"></div>
<svg style="left:1171px;top:1044px" width="24" height="24" viewBox="0 0 24 24"><circle cx="12" cy="12" r="12" fill="#db4437"/><path d="M12 12L22.4 6A12 12 0 0 1 12 24Z" fill="#fbc116"/><path d="M12 12L12 24A12 12 0 0 1 1.6 6Z" fill="#1da758"/><path d="M12 12L1.6 6A12 12 0 0 1 22.4 6Z" fill="#db4437"/><circle cx="12" cy="12" r="5.5" fill="#fff"/><circle cx="12" cy="12" r="4.3" fill="#3b82f0"/></svg>
<div class="a" style="left:1180px;top:1072px;width:6px;height:3px;border-radius:2px;background:#6f7f78"></div>
<div class="a" style="left:1215px;top:1044px;width:24px;height:24px;border-radius:3px;background:#2b5ef0"></div>
<svg style="left:1219px;top:1047px" width="16" height="18" viewBox="0 0 16 18"><path d="M2 1L8 8L14 1M8 8V17M3 9H13M3 12.5H13" fill="none" stroke="#fff" stroke-width="2"/></svg>
<div class="a" style="left:1223px;top:1072px;width:6px;height:3px;border-radius:2px;background:#6f7f78"></div>
<svg style="left:1259px;top:1044px" width="24" height="24" viewBox="0 0 24 24"><rect x="9" y="2" width="14" height="20" fill="#fff" stroke="#1e7145" stroke-width="1"/><g stroke="#1e7145" stroke-width=".8"><path d="M9 6H23M9 10H23M9 14H23M9 18H23M16 2V22"/></g><path d="M0 3L13 0V24L0 21Z" fill="#1e7145"/><path d="M3.5 7.5L9.5 16.5M9.5 7.5L3.5 16.5" stroke="#fff" stroke-width="1.8"/></svg>
<div class="a" style="left:1268px;top:1072px;width:6px;height:3px;border-radius:2px;background:#6f7f78"></div>
<!-- tray -->
<svg style="left:1646px;top:1052px" width="12" height="8" viewBox="0 0 12 8"><path d="M1 7L6 1.5L11 7" fill="none" stroke="#1a1a1a" stroke-width="1.3"/></svg>
<svg style="left:1675px;top:1048px" width="17" height="17" viewBox="0 0 17 17"><path d="M2 9A6 6 0 0 1 13.5 5.5M13.5 1.5V5.5H9.5" fill="none" stroke="#1a1a1a" stroke-width="1.3"/><path d="M14 8.5A6 6 0 0 1 3 11.5M1 15L3 11.5L6 12.5" fill="none" stroke="#1a1a1a" stroke-width="1.3"/><circle cx="12.5" cy="12.5" r="3.5" fill="#0a6ed8"/></svg>
<div class="a" style="left:1706px;top:1047px;font-size:14px;line-height:17px;color:#1a1a1a">中</div>
<div class="a" style="left:1745px;top:1047px;font-size:14px;line-height:17px;color:#1a1a1a">拼</div>
<svg style="left:1783px;top:1048px" width="16" height="16" viewBox="0 0 16 16"><path d="M10 1.5H1.5V11H10M5.5 11V14.5H2.5M5.5 14.5H10" fill="none" stroke="#1a1a1a" stroke-width="1.2"/><rect x="11.5" y="1" width="3.5" height="6" rx="1.7" fill="none" stroke="#1a1a1a" stroke-width="1.1"/><path d="M13.2 7V14.5" stroke="#1a1a1a" stroke-width="1.2"/></svg>
<svg style="left:1807px;top:1049px" width="17" height="15" viewBox="0 0 17 15"><path d="M1 5H4L8 1.5V13.5L4 10H1Z" fill="none" stroke="#1a1a1a" stroke-width="1.1"/><path d="M10.5 5A3 3 0 0 1 10.5 10M12.5 3A6 6 0 0 1 12.5 12M14.5 1A9 9 0 0 1 14.5 14" fill="none" stroke="#1a1a1a" stroke-width="1.1"/></svg>
<div class="a" style="left:1840px;top:1040px;width:61px;text-align:right;font-size:12px;line-height:15px;color:#111">13:46</div>
<div class="a" style="left:1830px;top:1057px;width:71px;text-align:right;font-size:12px;line-height:15px;color:#111">2025/12/16</div>

</body></html>
